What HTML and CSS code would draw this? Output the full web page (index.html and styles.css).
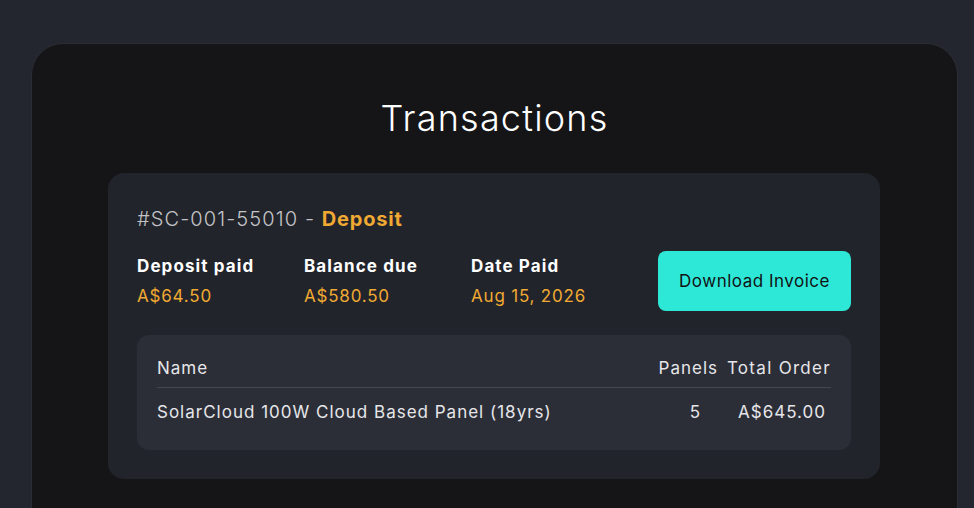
FILE: index.html
```html
<!DOCTYPE html>
<html lang="en">
  <head>
    <meta charset="UTF-8">
    <title>Transactions</title>
    <link rel="stylesheet" href="styles.css">
  </head>
  <body>
    <div class="panel">
      <h1 class="title">Transactions</h1>

      <div class="transaction">
        <div class="transaction-head">
          #SC-001-55010 - <span class="type">Deposit</span>
        </div>

        <div class="summary">
          <div class="stat">
            <div class="stat-label">Deposit paid</div>
            <div class="stat-value">A$64.50</div>
          </div>
          <div class="stat">
            <div class="stat-label">Balance due</div>
            <div class="stat-value">A$580.50</div>
          </div>
          <div class="stat">
            <div class="stat-label">Date Paid</div>
            <div class="stat-value">Aug 15, 2026</div>
          </div>
          <button class="invoice-button">Download Invoice</button>
        </div>

        <div class="items">
          <table>
            <thead>
              <tr>
                <th class="col-name">Name</th>
                <th class="col-panels">Panels</th>
                <th class="col-total">Total Order</th>
              </tr>
            </thead>
            <tbody>
              <tr>
                <td class="col-name">SolarCloud 100W Cloud Based Panel (18yrs)</td>
                <td class="col-panels">5</td>
                <td class="col-total">A$645.00</td>
              </tr>
            </tbody>
          </table>
        </div>
      </div>
    </div>
  </body>
</html>
```

FILE: styles.css
```css
html {
  height: 100%;
}
body {
  margin: 0;
  height: 100%;
  overflow: hidden;
  background-color: #23262e;
  font-family: "Inter", "Noto Sans", sans-serif;
  color: #e8e8ea;
}
.panel {
  margin: 43px 0 0 31px;
  width: 927px;
  min-height: 600px;
  background-color: #151517;
  border: 1px solid #2b2d33;
  border-radius: 32px;
  padding-top: 52px;
  box-sizing: border-box;
}
.title {
  margin: 0;
  text-align: center;
  font-weight: 300;
  font-size: 36px;
  letter-spacing: 1.2px;
  line-height: 44px;
  color: #ffffff;
}
.transaction {
  margin: 33px 77px 0 76px;
  background-color: #22242b;
  border-radius: 16px;
  padding: 31px 29px 29px 29px;
}
.transaction-head {
  font-size: 20px;
  font-weight: 300;
  letter-spacing: 1.1px;
  color: #c4c4c8;
  line-height: 30px;
}
.type {
  color: #f0a932;
  font-weight: 700;
  letter-spacing: 0.8px;
}
.summary {
  display: flex;
  align-items: center;
  margin-top: 17px;
}
.stat {
  width: 167px;
}
.stat-label {
  font-size: 17px;
  font-weight: 700;
  letter-spacing: 1.1px;
  color: #ffffff;
  line-height: 28px;
}
.stat-value {
  font-size: 17px;
  letter-spacing: 0.8px;
  color: #f0a932;
  line-height: 28px;
  margin-top: 2px;
}
.invoice-button {
  margin-left: auto;
  width: 193px;
  height: 60px;
  border: none;
  border-radius: 8px;
  background-color: #2de8d6;
  color: #111214;
  font-family: inherit;
  font-size: 17px;
  letter-spacing: 0.5px;
  cursor: pointer;
}
.items {
  margin-top: 24px;
  background-color: #2c2e37;
  border-radius: 12px;
  padding: 21px 20px 28px 20px;
}
table {
  width: 100%;
  border-collapse: collapse;
  font-size: 17px;
  letter-spacing: 1px;
  color: #e6e6ea;
}
th {
  font-weight: 400;
  padding: 2px 0 9px 0;
  border-bottom: 1px solid #45474e;
}
td {
  padding: 14px 0 0 0;
}
.col-name {
  text-align: left;
}
.col-panels {
  width: 72px;
  text-align: right;
}
td.col-panels {
  padding-right: 17px;
}
.col-total {
  width: 108px;
  text-align: right;
}
th.col-total {
  letter-spacing: 1.3px;
}
td.col-total {
  padding-right: 5px;
}
```
